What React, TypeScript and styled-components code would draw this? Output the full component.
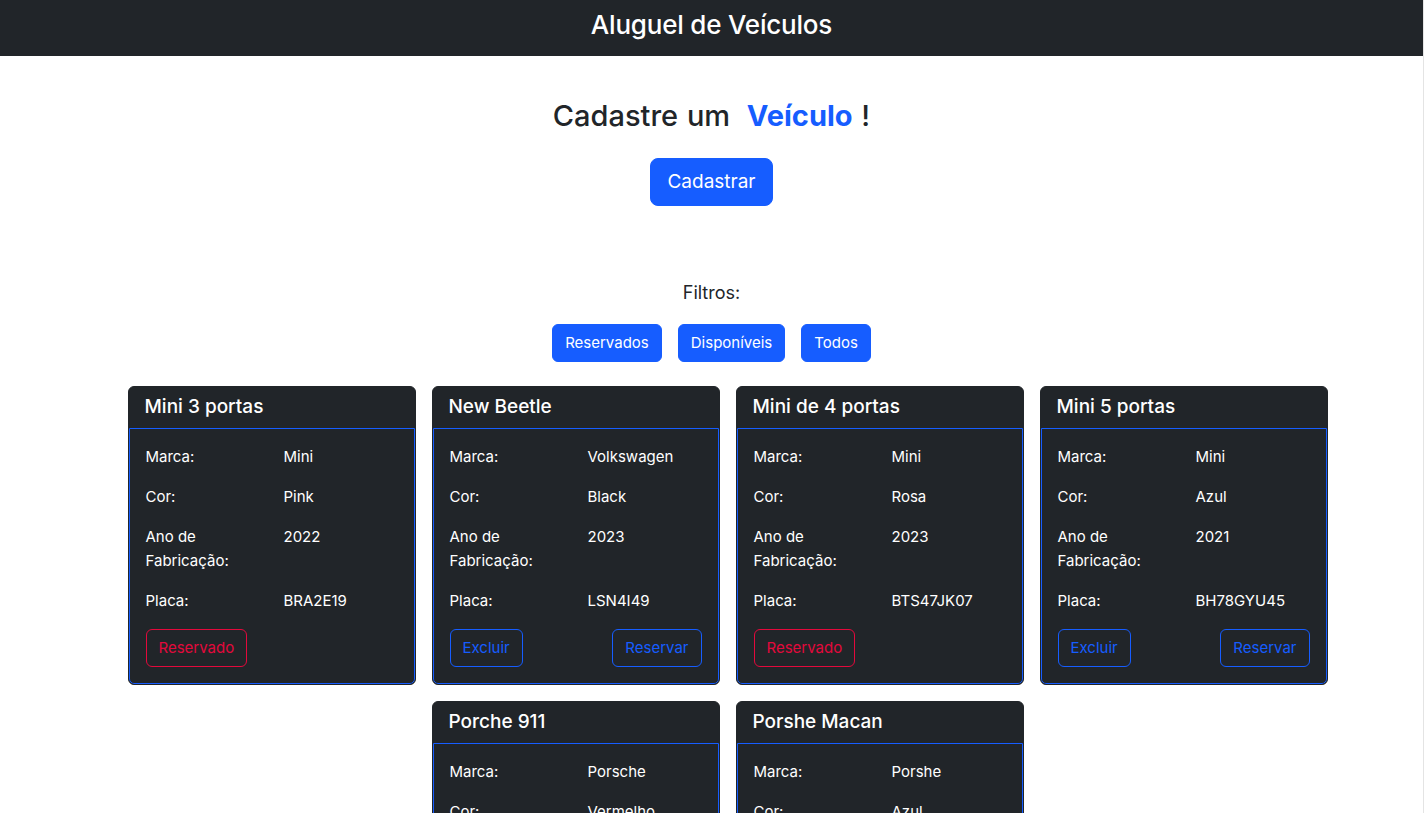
import React from "react";
import styled, { createGlobalStyle } from "styled-components";

const Global = createGlobalStyle`
  html, body { margin: 0; padding: 0; background: #fff; }
  body {
    font-family: Inter, "Noto Sans", sans-serif;
    color: #212529;
    font-size: 16px;
    line-height: 1.5;
    overflow: hidden;
  }
  * { box-sizing: border-box; }
`;

const Page = styled.div`
  width: 1424px;
  min-height: 813px;
  border-right: 1px solid #e4e4e4;
`;

const TopBar = styled.header`
  height: 56px;
  background: #212529;
  color: #fff;
  display: flex;
  align-items: center;
  justify-content: center;
  font-family: Inter, "Noto Sans", sans-serif;
  font-size: 26px;
  font-weight: 500;
  letter-spacing: -0.2px;
  padding-bottom: 8px;
`;

const Main = styled.main`
  display: flex;
  flex-direction: column;
  align-items: center;
  padding-top: 40px;
`;

const Title = styled.h2`
  margin: 0;
  font-size: 29px;
  font-weight: 500;
  line-height: 40px;
  word-spacing: 1px;
`;

const Accent = styled.strong`
  color: #165dff;
  font-weight: 700;
  margin-left: 8px;
`;

const Button = styled.button<{ $size?: "lg" | "md" }>`
  font-family: Inter, "Noto Sans", sans-serif;
  background: #165dff;
  color: #fff;
  border: 1px solid #165dff;
  border-radius: ${(p) => (p.$size === "lg" ? "8px" : "6px")};
  font-size: ${(p) => (p.$size === "lg" ? "19px" : "15px")};
  line-height: ${(p) => (p.$size === "lg" ? "30px" : "24px")};
  padding: ${(p) => (p.$size === "lg" ? "8px 16px" : "6px 12px")};
  cursor: pointer;
`;

const CreateButton = styled(Button)`
  margin-top: 22px;
`;

const FilterLabel = styled.p`
  margin: 74px 0 0;
  font-size: 18px;
  line-height: 26px;
`;

const FilterRow = styled.div`
  display: flex;
  gap: 16px;
  margin-top: 18px;
`;

const Grid = styled.div`
  display: flex;
  flex-wrap: wrap;
  justify-content: center;
  gap: 16px;
  width: 1200px;
  margin: 24px 0 0 32px;
`;

const Card = styled.div`
  width: 288px;
  background: #212529;
  color: #fff;
  border-radius: 6px;
  border: 1px solid #212529;
  overflow: hidden;
`;

const CardHeader = styled.div`
  height: 41px;
  padding: 0 16px;
  display: flex;
  align-items: center;
  font-size: 19px;
  font-weight: 500;
`;

const CardBody = styled.div`
  border: 1px solid #165dff;
  border-bottom-left-radius: 5px;
  border-bottom-right-radius: 5px;
  padding: 16px;
`;

const Info = styled.dl`
  display: grid;
  grid-template-columns: 138px 1fr;
  row-gap: 16px;
  margin: 0;
  font-size: 15px;
  line-height: 24px;
`;

const Label = styled.dt`
  margin: 0;
  padding-right: 12px;
`;

const Value = styled.dd`
  margin: 0;
`;

const Actions = styled.div`
  display: flex;
  justify-content: space-between;
  margin-top: 16px;
`;

const OutlineButton = styled.button<{ $tone: "primary" | "danger" }>`
  font-family: Inter, "Noto Sans", sans-serif;
  background: transparent;
  color: ${(p) => (p.$tone === "danger" ? "#e3093c" : "#165dff")};
  border: 1px solid ${(p) => (p.$tone === "danger" ? "#e3093c" : "#165dff")};
  border-radius: 6px;
  font-size: 15px;
  line-height: 24px;
  padding: 6px 12px;
  cursor: pointer;
`;

type Vehicle = {
  name: string;
  marca: string;
  cor: string;
  ano: string;
  placa: string;
  reservado: boolean;
};

const vehicles: Vehicle[] = [
  { name: "Mini 3 portas", marca: "Mini", cor: "Pink", ano: "2022", placa: "BRA2E19", reservado: true },
  { name: "New Beetle", marca: "Volkswagen", cor: "Black", ano: "2023", placa: "LSN4I49", reservado: false },
  { name: "Mini de 4 portas", marca: "Mini", cor: "Rosa", ano: "2023", placa: "BTS47JK07", reservado: true },
  { name: "Mini 5 portas", marca: "Mini", cor: "Azul", ano: "2021", placa: "BH78GYU45", reservado: false },
  { name: "Porche 911", marca: "Porsche", cor: "Vermelho", ano: "2020", placa: "POR9E11", reservado: false },
  { name: "Porshe Macan", marca: "Porshe", cor: "Azul", ano: "2022", placa: "MAC4N22", reservado: false },
];

function VehicleCard({ v }: { v: Vehicle }) {
  return (
    <Card>
      <CardHeader>{v.name}</CardHeader>
      <CardBody>
        <Info>
          <Label>Marca:</Label>
          <Value>{v.marca}</Value>
          <Label>Cor:</Label>
          <Value>{v.cor}</Value>
          <Label>Ano de Fabricação:</Label>
          <Value>{v.ano}</Value>
          <Label>Placa:</Label>
          <Value>{v.placa}</Value>
        </Info>
        <Actions>
          {v.reservado ? (
            <OutlineButton $tone="danger">Reservado</OutlineButton>
          ) : (
            <>
              <OutlineButton $tone="primary">Excluir</OutlineButton>
              <OutlineButton $tone="primary">Reservar</OutlineButton>
            </>
          )}
        </Actions>
      </CardBody>
    </Card>
  );
}

export default function App() {
  return (
    <Page>
      <Global />
      <TopBar>Aluguel de Veículos</TopBar>
      <Main>
        <Title>
          Cadastre um <Accent>Veículo</Accent> !
        </Title>
        <CreateButton $size="lg">Cadastrar</CreateButton>
        <FilterLabel>Filtros:</FilterLabel>
        <FilterRow>
          <Button>Reservados</Button>
          <Button>Disponíveis</Button>
          <Button>Todos</Button>
        </FilterRow>
        <Grid>
          {vehicles.map((v) => (
            <VehicleCard key={v.name} v={v} />
          ))}
        </Grid>
      </Main>
    </Page>
  );
}
